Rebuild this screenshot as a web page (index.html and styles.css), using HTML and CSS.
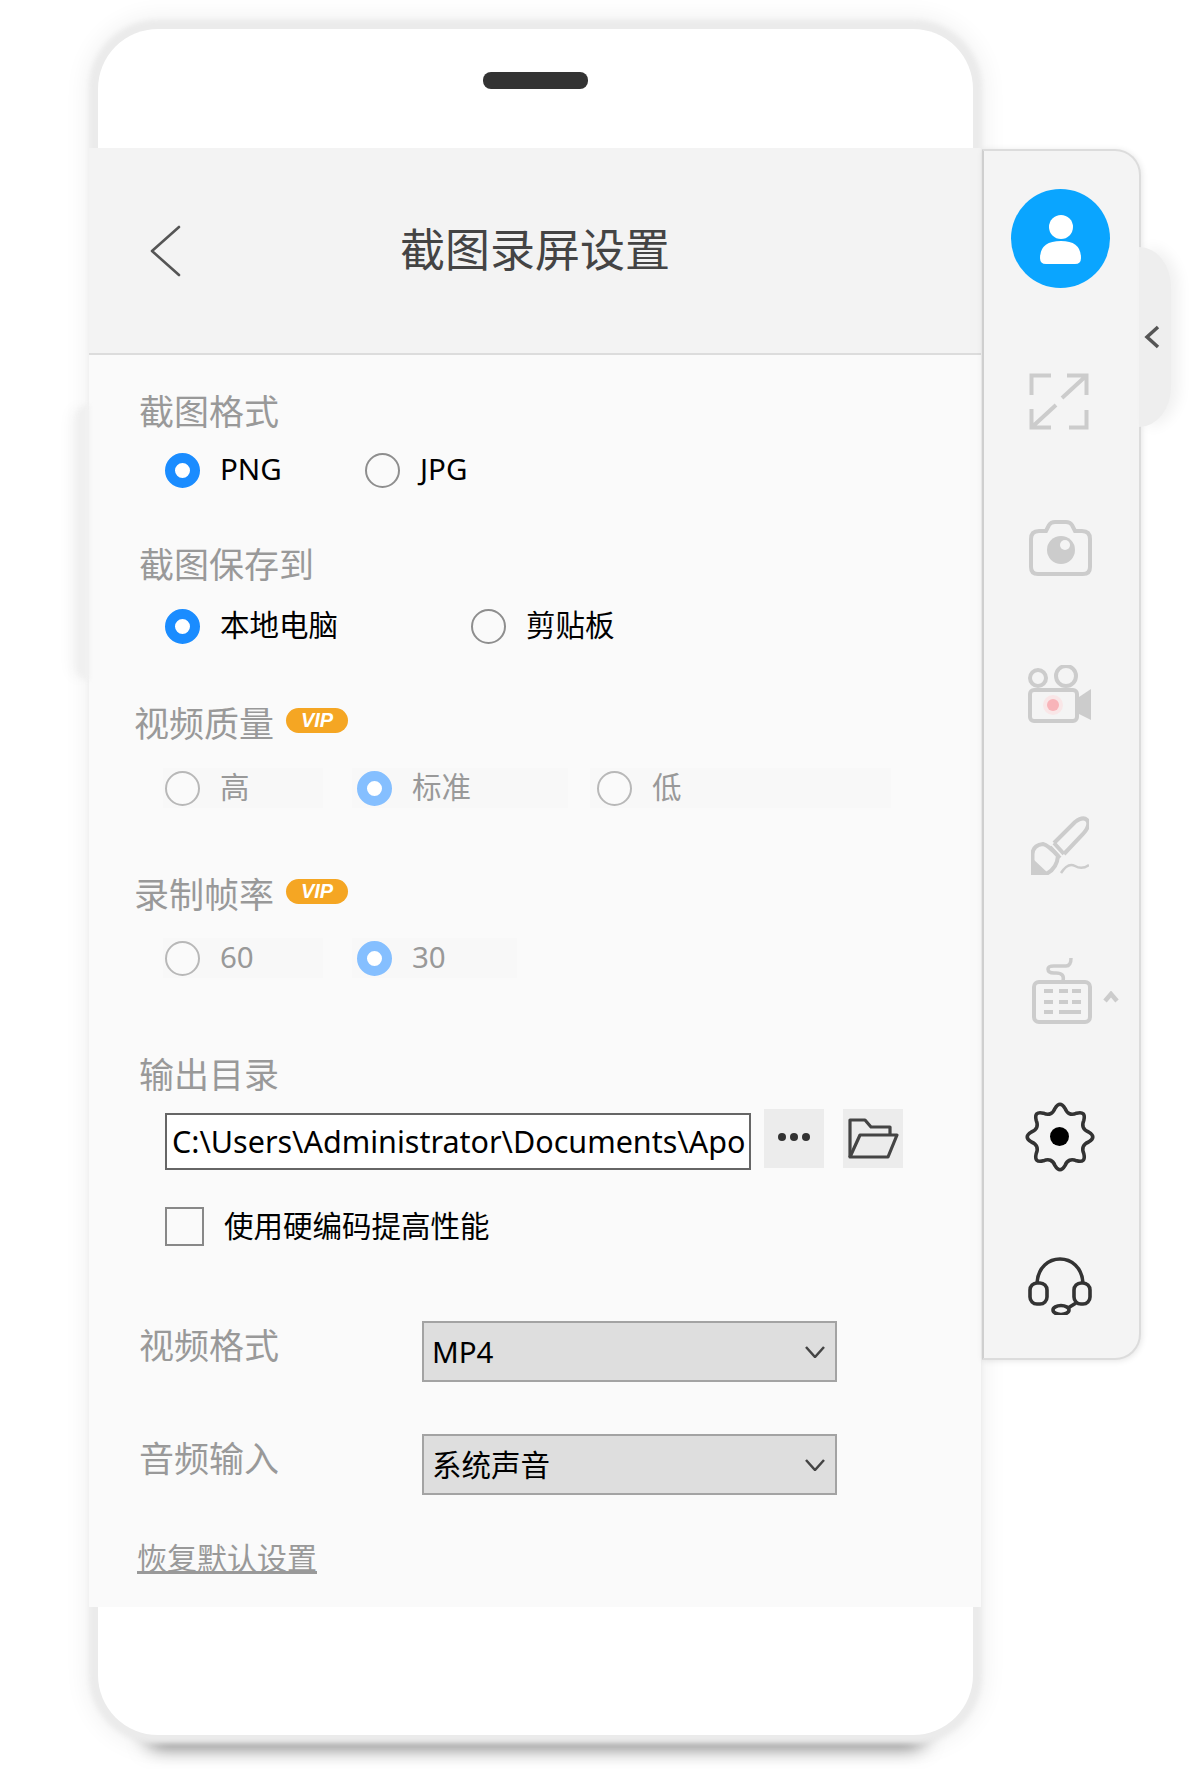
FILE: index.html
```html
<!DOCTYPE html>
<html lang="zh-CN">
<head>
<meta charset="utf-8">
<title>截图录屏设置</title>
<link rel="stylesheet" href="styles.css">
</head>
<body>
<div class="stage">
  <div class="phone">
    <div class="phone-top"><div class="notch"></div></div>
    <div class="panel">
      <div class="side-key"></div>
      <header class="panel-head">
        <svg class="back" width="32" height="52" viewBox="0 0 32 52"><path d="M30 2 L3 26 L30 50"/></svg>
        <h1 class="title">截图录屏设置</h1>
      </header>
      <div class="panel-body">
        <div class="label">截图格式</div>
        <div class="options opts-format">
          <div class="opt opt-png"><span class="radio on"></span><span>PNG</span></div>
          <div class="opt"><span class="radio"></span><span>JPG</span></div>
        </div>

        <div class="label label-save">截图保存到</div>
        <div class="options opts-save">
          <div class="opt opt-local"><span class="radio on"></span><span>本地电脑</span></div>
          <div class="opt"><span class="radio"></span><span>剪贴板</span></div>
        </div>

        <div class="label label-vip label-quality">视频质量<span class="vip">VIP</span></div>
        <div class="options disabled opts-quality">
          <div class="opt box box-a"><span class="radio"></span><span>高</span></div>
          <div class="opt box box-b"><span class="radio on"></span><span>标准</span></div>
          <div class="opt box box-c"><span class="radio"></span><span>低</span></div>
        </div>

        <div class="label label-vip label-fps">录制帧率<span class="vip">VIP</span></div>
        <div class="options disabled opts-fps">
          <div class="opt box box-a"><span class="radio"></span><span>60</span></div>
          <div class="opt box box-d"><span class="radio on"></span><span>30</span></div>
        </div>

        <div class="label label-dir">输出目录</div>
        <div class="dir-row">
          <div class="path">C:\Users\Administrator\Documents\Apo</div>
          <div class="tool-btn">
            <svg width="34" height="10" viewBox="0 0 34 10"><circle cx="5" cy="5" r="4"/><circle cx="17" cy="5" r="4"/><circle cx="29" cy="5" r="4"/></svg>
          </div>
          <div class="tool-btn">
            <svg class="folder" width="52" height="43" viewBox="0 0 52 43"><path d="M3 40 V3 H18 L24 10 H43 V18"/><path d="M3 40 L13 18 H50 L41 40 Z"/></svg>
          </div>
        </div>
        <div class="check-row"><span class="check"></span><span class="check-text">使用硬编码提高性能</span></div>

        <div class="select-row row-video">
          <div class="select-label">视频格式</div>
          <div class="select"><span>MP4</span><svg width="20" height="12" viewBox="0 0 20 12"><path d="M1 1 L10 11 L19 1"/></svg></div>
        </div>
        <div class="select-row row-audio">
          <div class="select-label">音频输入</div>
          <div class="select"><span>系统声音</span><svg width="20" height="12" viewBox="0 0 20 12"><path d="M1 1 L10 11 L19 1"/></svg></div>
        </div>
        <a class="reset">恢复默认设置</a>
      </div>
    </div>
  </div>

  <aside class="side">
    <div class="handle"><svg width="16" height="24" viewBox="0 0 16 24"><path d="M14 2 L3 12 L14 22"/></svg></div>

    <svg class="ic-avatar" width="99" height="99" viewBox="0 0 99 99">
      <circle cx="49.5" cy="49.5" r="49.5" fill="#0aa5ff"/>
      <circle cx="50" cy="38" r="12" fill="#fff"/>
      <path d="M29 69 Q29 52 50 52 Q70 52 70 69 Q70 75 64 75 H35 Q29 75 29 69 Z" fill="#fff"/>
    </svg>

    <svg class="ic ic-expand" width="60" height="57" viewBox="0 0 60 57">
      <path d="M2.500 22 V2.500 H22 M38 2.500 H57.500 V22 M57.500 2.500 L33 25 M57.500 37 V54.500 H40 M2.500 36 V54.500 H22 M2.500 54.500 L27 32"/>
    </svg>

    <svg class="ic ic-camera" width="63" height="56" viewBox="0 0 63 56">
      <path d="M10 11 H17 L20 5 Q22 2 26 2 H37 Q41 2 43 5 L46 11 H53 Q61 11 61 19 V47 Q61 54 54 54 H9 Q2 54 2 47 V19 Q2 11 10 11 Z"/>
      <circle class="solid" cx="32" cy="30" r="14"/>
      <circle class="hole" cx="36" cy="25" r="5"/>
    </svg>

    <svg class="ic ic-video" width="64" height="58" viewBox="0 0 64 58">
      <circle cx="10" cy="13" r="8"/>
      <circle cx="38" cy="11" r="10"/>
      <rect x="2" y="25" width="47" height="31" rx="4"/>
      <path class="solid" d="M51 32 L63 24 V55 L51 49 Z"/>
      <circle class="rec-halo" cx="25" cy="40" r="10"/>
      <circle class="rec-dot" cx="25" cy="40" r="6"/>
    </svg>

    <svg class="ic ic-brush" width="58" height="59" viewBox="0 0 58 59">
      <path d="M23 27 L44 6 Q52 0 56 4 Q60 9 52 18 L33 38"/>
      <path d="M23 27 L33 38 M19 31 L29 42"/>
      <path d="M1.500 57.500 V38 Q2 29 12 28 Q17 29 27 40 Q26 52 16 57.500 Z"/>
      <path class="solid" d="M1 58 V42 L18 58 Z"/>
      <path class="thin" d="M30 57 Q37 46 44 50 Q51 54 58 49"/>
    </svg>

    <div class="kbd-wrap">
      <svg class="ic" width="60" height="66" viewBox="0 0 60 66">
        <path class="thin2" d="M31 23 Q33 15 24 15 H22 Q16 15 16 11 Q16 8 22 8 H34 Q39 8 39 0"/>
        <rect x="2" y="24" width="56" height="40" rx="5"/>
        <path d="M12 33 H21 M27 33 H36 M40 33 H49 M12 44 H21 M27 44 H36 M40 44 H49 M12 54 H21 M27 54 H49"/>
      </svg>
      <svg class="ic kbd-up" width="16" height="12" viewBox="0 0 16 12"><path d="M2 10 L8 3 L14 10"/></svg>
    </div>

    <svg class="ic-dark ic-gear" width="70" height="70" viewBox="0 0 70 70">
      <path d="M63.600 30 Q72 35 63.600 40 Q55.300 43.400 58.800 51.600 Q61.200 61.200 51.600 58.800 Q43.400 55.300 40 63.600 Q35 72 30 63.600 Q26.600 55.300 18.400 58.800 Q8.800 61.200 11.200 51.600 Q14.700 43.400 6.400 40 Q-2 35 6.400 30 Q14.700 26.600 11.200 18.400 Q8.800 8.800 18.400 11.200 Q26.600 14.700 30 6.400 Q35 -2 40 6.400 Q43.400 14.700 51.600 11.200 Q61.200 8.800 58.800 18.400 Q55.300 26.600 63.600 30 Z"/>
      <circle class="dot" cx="34.500" cy="34.500" r="9.500"/>
    </svg>

    <svg class="ic-dark ic-headset" width="64" height="58" viewBox="0 0 64 58">
      <path d="M9 26 C11 -6 53 -6 55 26"/>
      <rect x="2" y="26" width="17" height="21" rx="7"/>
      <rect x="46" y="26" width="16" height="21" rx="7"/>
      <ellipse cx="33" cy="53" rx="8" ry="4.500"/>
      <path d="M48 46 L40 51"/>
    </svg>
  </aside>
</div>
</body>
</html>
```

FILE: styles.css
```css
* { box-sizing: border-box; }
html, body { margin: 0; background: #fff; }
body {
  width: 1200px;
  height: 1769px;
  overflow: hidden;
  font-family: "Noto Sans", "Noto Sans CJK SC", sans-serif;
  color: #000;
}
.stage {
  display: flex;
  align-items: flex-start;
  padding: 29px 0 0 98px;
}

/* phone */
.phone {
  width: 875px;
  height: 1706px;
  flex: none;
  background: #fff;
  border-radius: 60px;
  box-shadow:
    0 0 5px 9px #ebebeb,
    0 0 24px 12px rgba(0, 0, 0, .06),
    0 62px 20px -50px rgba(0, 0, 0, .55);
}
.phone-top {
  height: 119px;
  display: flex;
  justify-content: center;
  padding-top: 43px;
}
.notch { width: 105px; height: 17px; border-radius: 8px; background: #333; }

/* panel */
.panel {
  margin: 0 -8px 0 -9px;
  height: 1459px;
  background: #fafafa;
  position: relative;
}
.side-key {
  position: absolute;
  left: -13px;
  top: 257px;
  width: 13px;
  height: 275px;
  background: #f0f0f0;
  border-radius: 13px 0 0 13px;
  box-shadow: -6px 0 14px rgba(0, 0, 0, .04);
  filter: blur(2px);
}
.panel-head {
  height: 207px;
  background: #f3f3f3;
  border-bottom: 2px solid #dcdcdc;
  display: flex;
  align-items: center;
  justify-content: center;
  position: relative;
}
.back {
  position: absolute;
  left: 60px;
  top: 77px;
  fill: none;
  stroke: #555;
  stroke-width: 2.6;
  stroke-linecap: round;
  stroke-linejoin: round;
}
.title {
  margin: 0;
  padding-bottom: 6px;
  font: 400 45px/60px "Noto Sans CJK SC", sans-serif;
  color: #444;
}
.panel-body { position: relative; padding: 37px 0 0 50px; }

.label {
  height: 40px;
  font: 400 35px/35px "Noto Sans CJK SC", sans-serif;
  color: #999;
}
.label-save { margin-top: 55px; }
.label-quality { margin-top: 58px; margin-left: -5px; }
.label-fps { margin-top: 67px; margin-left: -5px; }
.label-dir { margin-top: 77px; }
.label-vip { display: flex; align-items: flex-start; }
.vip {
  width: 62px;
  height: 25px;
  margin: 4px 0 0 12px;
  border-radius: 13px;
  background: #f5a623;
  color: #fff;
  font: italic 700 20px/25px "Liberation Sans", sans-serif;
  text-align: center;
}

.options { display: flex; margin-left: 26px; font-size: 29.5px; line-height: 38px; }
.opts-format { margin-top: 18px; }
.opts-save { margin-top: 21px; }
.opts-quality { margin-top: 24px; margin-left: 24px; }
.opts-fps { margin-top: 23px; margin-left: 24px; }
.opt { display: flex; align-items: flex-start; height: 40px; gap: 20px; }
.radio {
  width: 35px;
  height: 35px;
  margin-top: 2.5px;
  flex: none;
  border-radius: 50%;
  border: 2.5px solid #8e8e8e;
  background: #fafafa;
}
.opt-png { width: 200px; }
.opt-local { width: 306px; }
.radio.on { border: 10.500px solid #1a8cff; background: #fff; }
.disabled { color: #999; }
.disabled .radio { border-color: #b8b8b8; }
.disabled .radio.on { border-color: #85bfff; }
.box { background: #f8f8f8; padding-left: 2px; }
.box-a { width: 160px; margin-right: 29px; }
.box-b { width: 216px; margin-right: 22px; padding-left: 5px; }
.box-c { width: 301px; padding-left: 7px; }
.box-d { width: 165px; padding-left: 5px; }

.dir-row { display: flex; align-items: flex-start; gap: 13px; margin: 14px 0 0 26px; height: 59px; }
.path {
  width: 586px;
  height: 57px;
  margin-top: 4px;
  border: 2px solid #666;
  background: #fff;
  padding: 0 0 0 5px;
  font-size: 30.5px;
  line-height: 53px;
  white-space: nowrap;
  overflow: hidden;
}
.tool-btn {
  width: 60px;
  height: 59px;
  flex: none;
  background: #ececec;
  display: flex;
  align-items: center;
  justify-content: center;
}
.tool-btn:last-child { margin-left: 6px; }
.tool-btn svg { fill: #333; margin-bottom: 4px; }
.tool-btn .folder { fill: none; stroke: #444; stroke-width: 3.200; stroke-linejoin: round; margin-bottom: 0; }

.check-row {
  display: flex;
  align-items: flex-start;
  gap: 20px;
  margin: 39px 0 0 26px;
  height: 40px;
  font: 400 29.5px/34px "Noto Sans CJK SC", sans-serif;
}
.check { width: 39px; height: 39px; border: 2px solid #888; background: #fafafa; }

.select-row { display: flex; align-items: flex-start; }
.row-video { margin-top: 74px; }
.row-audio { margin-top: 52px; }
.select-label {
  width: 283px;
  font: 400 35px/40px "Noto Sans CJK SC", sans-serif;
  color: #999;
  margin-top: 3px;
}
.select {
  width: 415px;
  height: 61px;
  border: 2px solid #a3a3a3;
  background: #dedede;
  display: flex;
  align-items: center;
  justify-content: space-between;
  padding: 0 10px 0 8px;
  font: 400 29.5px/40px "Noto Sans", "Noto Sans CJK SC", sans-serif;
}
.select svg { fill: none; stroke: #444; stroke-width: 2.500; }

.reset {
  display: block;
  width: max-content;
  margin: 41px 0 0 -2px;
  font: 400 30px/40px "Noto Sans CJK SC", sans-serif;
  color: #999;
  text-decoration: underline;
}

/* sidebar */
.side {
  position: relative;
  width: 159px;
  height: 1211px;
  flex: none;
  margin: 120px 0 0 9px;
  background: #f4f4f4;
  border: solid #dcdcdc;
  border-width: 2px 2px 2px 0;
  border-left: 2px solid #cfcfcf;
  border-radius: 0 26px 26px 0;
  box-shadow: 1px 1px 6px rgba(0, 0, 0, .1);
  display: flex;
  flex-direction: column;
  align-items: center;
  padding: 38px 3px 0 0;
}
.handle {
  position: absolute;
  left: 155px;
  top: 96px;
  width: 32px;
  height: 180px;
  background: #eeeeee;
  border-radius: 0 32px 32px 0 / 0 40px 40px 0;
  box-shadow: 8px 0 14px rgba(0, 0, 0, .06);
  display: flex;
  align-items: center;
  padding-left: 5px;
}
.handle svg { fill: none; stroke: #555; stroke-width: 3.500; }
.ic-avatar { flex: none; }
.ic { fill: none; stroke: #ccc; stroke-width: 4; flex: none; display: block; }
.ic .solid { fill: #ccc; stroke: none; }
.ic .hole { fill: #f4f4f4; stroke: none; }
.ic .rec-halo { fill: #f9e6e7; stroke: none; }
.ic .rec-dot { fill: #f8b4b9; stroke: none; }
.ic .thin { stroke-width: 2.500; }
.ic .thin2 { stroke-width: 3.500; }
.ic-expand { margin-top: 85px; margin-right: 3px; }
.ic-camera { margin-top: 90px; }
.ic-video { margin-top: 89px; }
.ic-brush { margin-top: 93px; }
.kbd-wrap { position: relative; margin: 83px 0 0 3px; height: 66px; }
.kbd-up { position: absolute; left: 71px; top: 33px; stroke-width: 4.500; }
.ic-dark { fill: none; stroke: #333; stroke-width: 3.600; stroke-linejoin: round; flex: none; }
.ic-dark .dot { fill: #000; stroke: none; }
.ic-gear { margin-top: 78px; }
.ic-headset { margin-top: 85px; }
```
